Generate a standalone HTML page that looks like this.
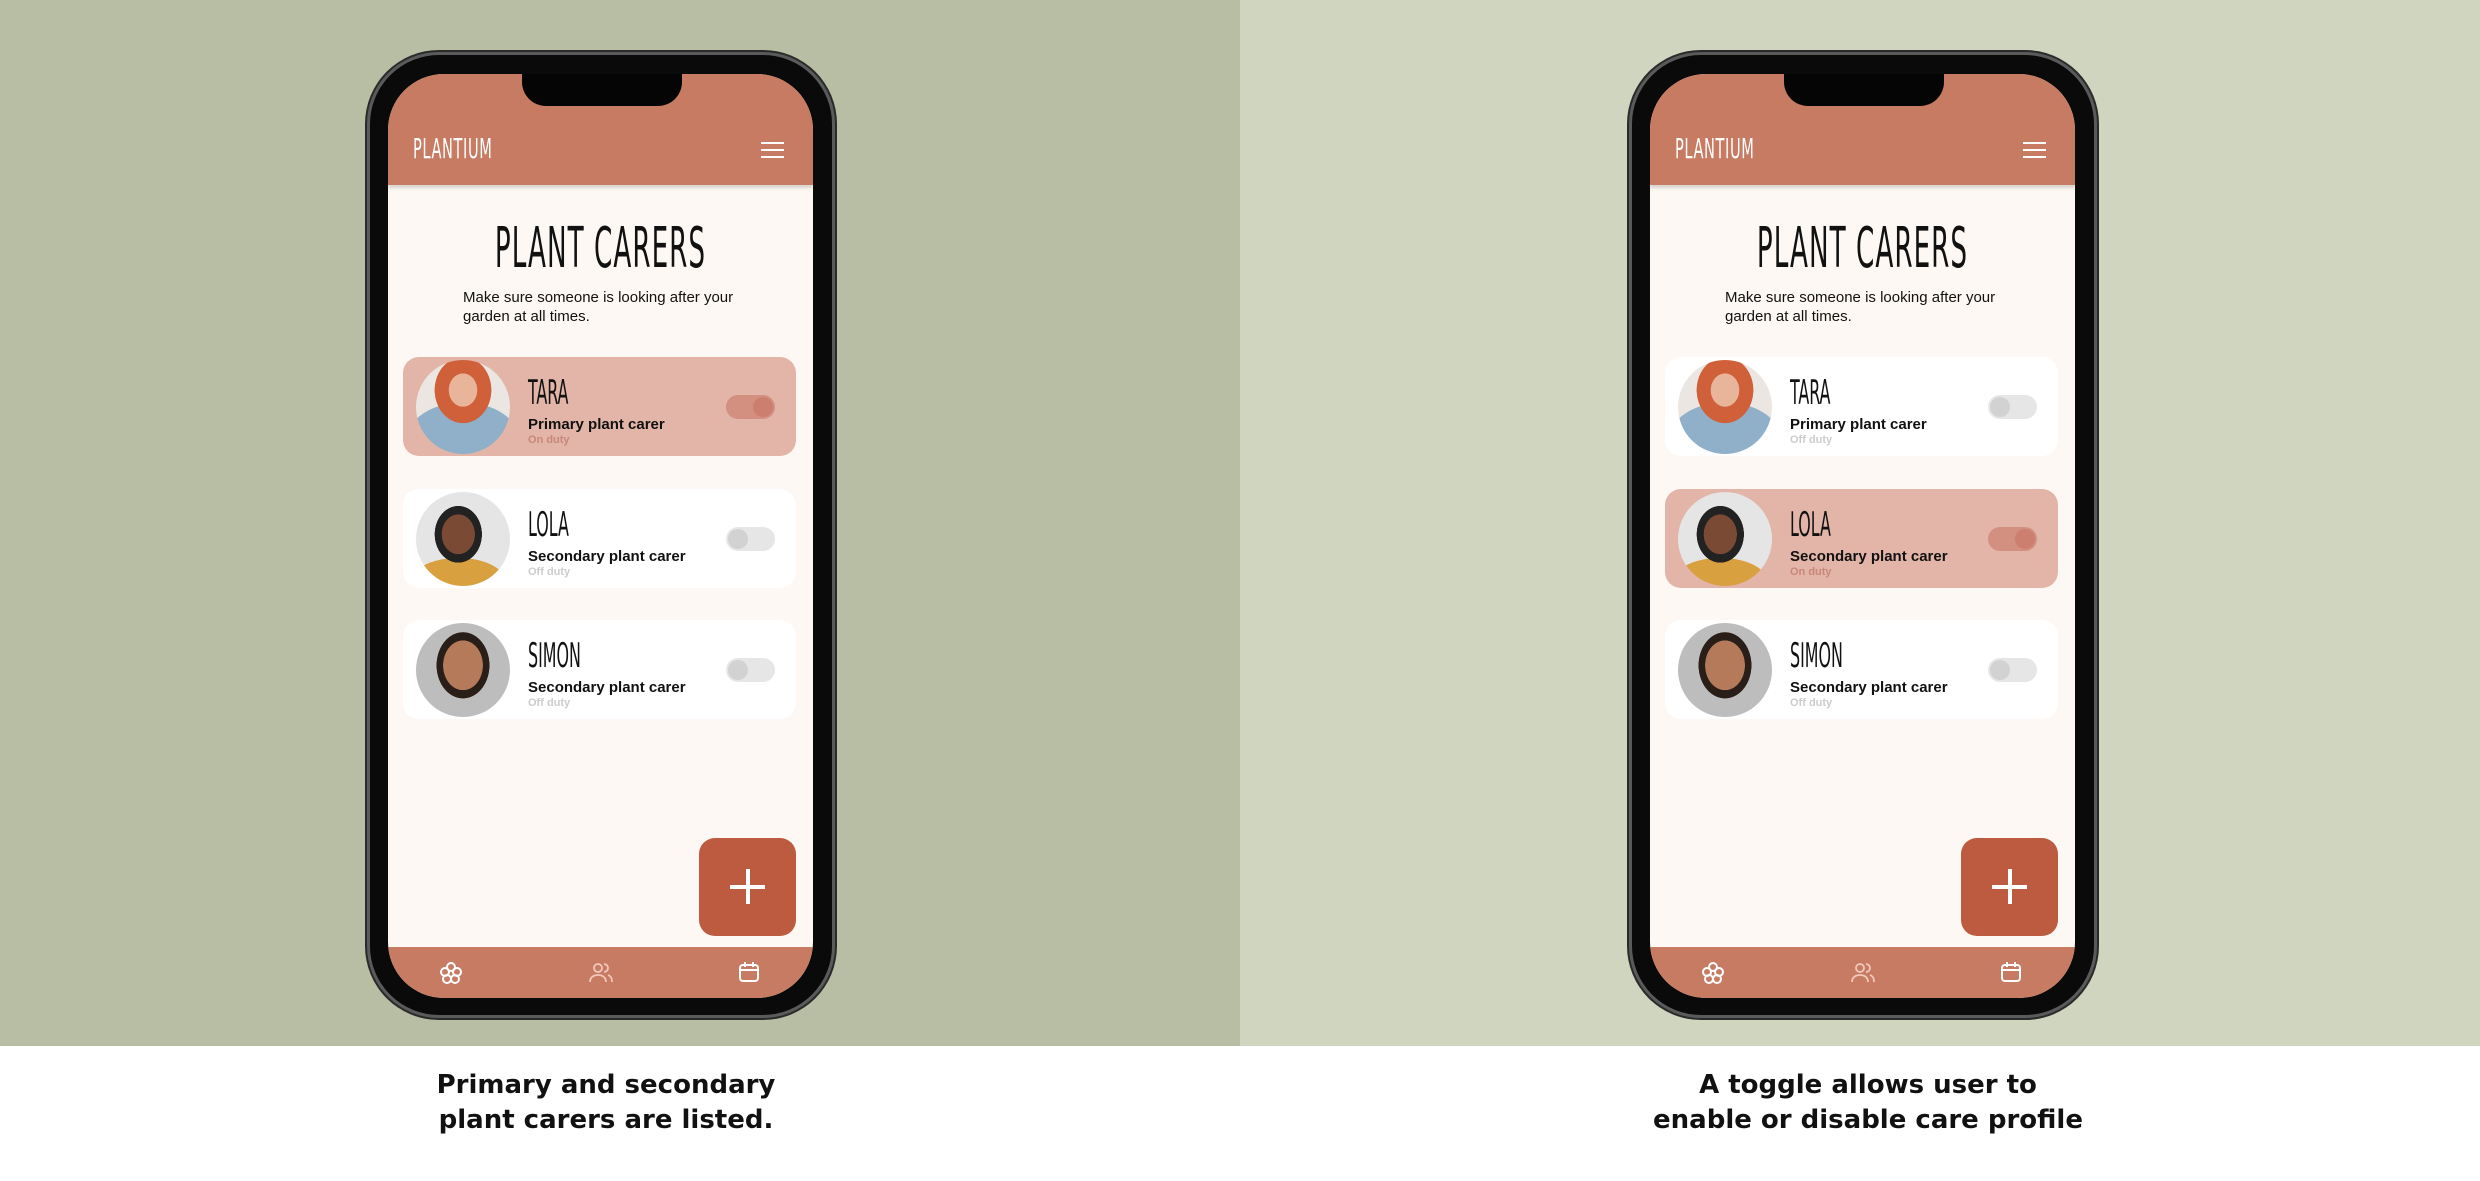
<!DOCTYPE html>
<html><head><meta charset="utf-8"><style>
*{margin:0;padding:0;box-sizing:border-box}
body{width:2480px;height:1181px;background:#fff;position:relative;overflow:hidden;font-family:"Liberation Sans",sans-serif}
.bg{position:absolute;top:0;height:1046px}
.ph{position:absolute;top:52px;width:468px;height:966px;border-radius:72px;background:#0a0a0a;border:3px solid #5a5a5a;box-shadow:0 0 0 2px #2a2a2a}
.scr{position:absolute;left:18px;top:19px;width:425px;height:924px;border-radius:56px;overflow:hidden;background:#fdf8f3}
.hdr{position:absolute;left:0;top:0;width:100%;height:111px;background:#c77b63;box-shadow:0 3px 3px rgba(0,0,0,.15)}
.notch{position:absolute;left:134px;top:0;width:160px;height:32px;background:#050505;border-radius:0 0 24px 24px}
.logo{position:absolute;left:25px;top:58px;color:#fff;font-size:28px;font-family:"DejaVu Sans Condensed",sans-serif;transform:scaleX(.58);transform-origin:left;white-space:nowrap;letter-spacing:1px}
.ham{position:absolute;left:373px;top:68px;width:23px}
.ham i{display:block;height:2px;background:#fff;margin-bottom:5px}
.title{position:absolute;left:0;width:100%;top:142px;text-align:center;font-size:56px;white-space:nowrap;font-family:"DejaVu Sans Condensed",sans-serif;transform:scaleX(.52);transform-origin:center;color:#111;letter-spacing:2px}
.sub{position:absolute;left:75px;top:214px;font-size:15px;line-height:19px;color:#111;width:300px}
.card{position:absolute;left:15px;width:393px;height:99px;border-radius:16px;background:#fff}
.card.on{background:#e2b5a8}
.av{position:absolute;left:13px;top:3px;width:94px;height:94px;border-radius:50%}
.nm{position:absolute;left:125px;top:16px;font-size:34px;white-space:nowrap;font-family:"DejaVu Sans Condensed",sans-serif;transform:scaleX(.52);transform-origin:left;color:#111}
.rl{position:absolute;left:125px;top:59px;font-size:15px;font-weight:bold;color:#111}
.st{position:absolute;left:125px;top:77px;font-size:11px;font-weight:bold;color:#ccc}
.on .st{color:#c9867a}
.tg{position:absolute;left:323px;top:38px;width:49px;height:24px;border-radius:12px;background:#e6e6e6}
.tg b{position:absolute;left:2px;top:2px;width:20px;height:20px;border-radius:50%;background:#d2d2d2}
.on .tg{background:#d38f80}.on .tg b{left:27px;background:#cd7f6f}
.fab{position:absolute;left:311px;top:764px;width:97px;height:98px;border-radius:16px;background:#bd5b40}
.fab:before{content:"";position:absolute;left:31px;top:47px;width:35px;height:4px;background:#fff}
.fab:after{content:"";position:absolute;left:47px;top:31px;width:4px;height:35px;background:#fff}
.nav{position:absolute;left:0;top:873px;width:100%;height:52px;background:#c77b63}
.cap{position:absolute;top:1068px;width:700px;text-align:center;font-size:26px;font-weight:bold;line-height:35px;color:#111;font-family:"DejaVu Sans",sans-serif}
</style></head><body>
<div class="bg" style="left:0;width:1240px;background:#b7bea3"></div>
<div class="bg" style="left:1240px;width:1240px;background:#cfd5bf"></div>

<div class="ph" style="left:367px">
<div class="scr">
<div class="hdr"><div class="notch"></div><div class="logo">PLANTIUM</div><div class="ham"><i></i><i></i><i></i></div></div>
<div class="title">PLANT CARERS</div>
<div class="sub">Make sure someone is looking after your garden at all times.</div>
<div class="card on" style="top:283px"><div class="av" style="background:radial-gradient(ellipse 30% 35% at 50% 32%,#e8b49a 0 50%,#d0603a 51% 100%,transparent 101%),radial-gradient(ellipse 60% 40% at 50% 85%,#8fb0c8 0 99%,transparent 100%),#ece6e2"></div><div class="nm">TARA</div><div class="rl">Primary plant carer</div><div class="st">On duty</div><div class="tg"><b></b></div></div>
<div class="card" style="top:415px"><div class="av" style="background:radial-gradient(ellipse 25% 30% at 45% 45%,#7a4a34 0 70%,#222 71% 100%,transparent 101%),radial-gradient(ellipse 50% 25% at 45% 95%,#d9a040 0 99%,transparent 100%),#e5e5e5"></div><div class="nm">LOLA</div><div class="rl">Secondary plant carer</div><div class="st">Off duty</div><div class="tg"><b></b></div></div>
<div class="card" style="top:546px"><div class="av" style="background:radial-gradient(ellipse 28% 35% at 50% 45%,#b57a5a 0 75%,#2a1e18 76% 100%,transparent 101%),#bdbdbd"></div><div class="nm">SIMON</div><div class="rl">Secondary plant carer</div><div class="st">Off duty</div><div class="tg"><b></b></div></div>
<div class="fab"></div>
<div class="nav">
<svg style="position:absolute;left:52px;top:15px" width="22" height="22" viewBox="0 0 22 22" fill="none" stroke="#fff" stroke-width="2"><circle cx="11" cy="5" r="4"/><circle cx="5" cy="10" r="4"/><circle cx="17" cy="10" r="4"/><circle cx="7" cy="17" r="4"/><circle cx="15" cy="17" r="4"/></svg>
<svg style="position:absolute;left:200px;top:15px" width="26" height="22" viewBox="0 0 26 22" fill="none" stroke="#f0c8bc" stroke-width="1.8"><circle cx="10" cy="6" r="4"/><path d="M2 20c0-5 4-7 8-7s8 2 8 7"/><path d="M16 2a4 4 0 010 8M20 13c3 1 4 3 4 7"/></svg>
<svg style="position:absolute;left:350px;top:14px" width="22" height="22" viewBox="0 0 22 22" fill="none" stroke="#fff" stroke-width="2"><rect x="2" y="4" width="18" height="16" rx="3"/><path d="M2 9h18M7 1v5M15 1v5"/></svg>
</div>
</div></div>

<div class="ph" style="left:1629px">
<div class="scr">
<div class="hdr"><div class="notch"></div><div class="logo">PLANTIUM</div><div class="ham"><i></i><i></i><i></i></div></div>
<div class="title">PLANT CARERS</div>
<div class="sub">Make sure someone is looking after your garden at all times.</div>
<div class="card" style="top:283px"><div class="av" style="background:radial-gradient(ellipse 30% 35% at 50% 32%,#e8b49a 0 50%,#d0603a 51% 100%,transparent 101%),radial-gradient(ellipse 60% 40% at 50% 85%,#8fb0c8 0 99%,transparent 100%),#ece6e2"></div><div class="nm">TARA</div><div class="rl">Primary plant carer</div><div class="st">Off duty</div><div class="tg"><b></b></div></div>
<div class="card on" style="top:415px"><div class="av" style="background:radial-gradient(ellipse 25% 30% at 45% 45%,#7a4a34 0 70%,#222 71% 100%,transparent 101%),radial-gradient(ellipse 50% 25% at 45% 95%,#d9a040 0 99%,transparent 100%),#e5e5e5"></div><div class="nm">LOLA</div><div class="rl">Secondary plant carer</div><div class="st">On duty</div><div class="tg"><b></b></div></div>
<div class="card" style="top:546px"><div class="av" style="background:radial-gradient(ellipse 28% 35% at 50% 45%,#b57a5a 0 75%,#2a1e18 76% 100%,transparent 101%),#bdbdbd"></div><div class="nm">SIMON</div><div class="rl">Secondary plant carer</div><div class="st">Off duty</div><div class="tg"><b></b></div></div>
<div class="fab"></div>
<div class="nav">
<svg style="position:absolute;left:52px;top:15px" width="22" height="22" viewBox="0 0 22 22" fill="none" stroke="#fff" stroke-width="2"><circle cx="11" cy="5" r="4"/><circle cx="5" cy="10" r="4"/><circle cx="17" cy="10" r="4"/><circle cx="7" cy="17" r="4"/><circle cx="15" cy="17" r="4"/></svg>
<svg style="position:absolute;left:200px;top:15px" width="26" height="22" viewBox="0 0 26 22" fill="none" stroke="#f0c8bc" stroke-width="1.8"><circle cx="10" cy="6" r="4"/><path d="M2 20c0-5 4-7 8-7s8 2 8 7"/><path d="M16 2a4 4 0 010 8M20 13c3 1 4 3 4 7"/></svg>
<svg style="position:absolute;left:350px;top:14px" width="22" height="22" viewBox="0 0 22 22" fill="none" stroke="#fff" stroke-width="2"><rect x="2" y="4" width="18" height="16" rx="3"/><path d="M2 9h18M7 1v5M15 1v5"/></svg>
</div>
</div></div>

<div class="cap" style="left:256px">Primary and secondary<br>plant carers are listed.</div>
<div class="cap" style="left:1518px">A toggle allows user to<br>enable or disable care profile</div>
</body></html>
